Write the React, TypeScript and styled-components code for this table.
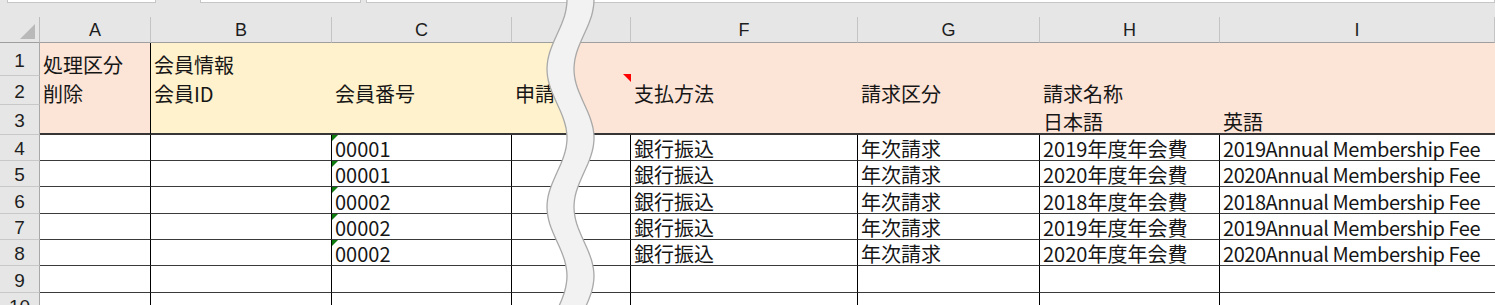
import React from 'react';
import styled, { createGlobalStyle } from 'styled-components';

const GlobalStyle = createGlobalStyle`
  html, body {
    margin: 0;
    padding: 0;
    background: #ffffff;
    overflow: hidden;
  }
`;

const PEACH = '#fce4d6';
const YELLOW = '#fff2cc';
const HEAD = '#e6e6e6';
const LINE_V = '1px solid #000';
const LINE_H = '1px solid #3a3a3a';

// row header + A..H, column I takes the rest
const COLS = [40, 111, 181, 180, 56, 63, 227, 182, 180];
const LETTERS = ['A', 'B', 'C', '', '', 'F', 'G', 'H', 'I'];
const HEAD_BG = [PEACH, YELLOW, YELLOW, YELLOW, PEACH, PEACH, PEACH, PEACH, PEACH];

const Page = styled.div`
  position: relative;
  width: 1495px;
  height: 305px;
  overflow: hidden;
  font-family: 'Noto Sans CJK JP', 'Noto Sans', sans-serif;
  color: #161616;
`;

const TopStrip = styled.div`
  height: 17px;
  background: ${HEAD};
  display: grid;
  grid-template-columns: 149px 161px 1fr;
  column-gap: 44px;
  padding-left: 7px;
  align-items: start;

  & > div:last-child {
    margin-left: -39px;
  }
`;

const FormulaBox = styled.div`
  height: 2px;
  background: #fff;
  border: 1px solid #c6c6c6;
  border-top: none;
`;

const Sheet = styled.div`
  display: grid;
  grid-template-columns: ${COLS.map((c) => `${c}px`).join(' ')} 1fr;
  grid-template-rows: 26px 33px 29px 30px 26px 26px 27px 26px 26px 27px 26px;
`;

const Corner = styled.div`
  background: ${HEAD};
  border-right: 1px solid #bcbcbc;
  border-bottom: 1px solid #9f9f9f;
  display: flex;
  align-items: flex-end;
  justify-content: flex-end;
  padding: 0 4px 3px 0;

  &::after {
    content: '';
    border-bottom: 15px solid #b9b9b9;
    border-left: 15px solid transparent;
  }
`;

const ColHead = styled.div`
  background: ${HEAD};
  border-right: 1px solid #c4c4c4;
  border-bottom: 1px solid #9f9f9f;
  display: flex;
  align-items: center;
  justify-content: center;
  font-family: 'Liberation Sans', Arial, sans-serif;
  font-size: 18px;
  color: #1e1e1e;
  padding-top: 1px;
`;

const RowHead = styled.div`
  background: ${HEAD};
  border-right: 1px solid #a8a8a8;
  border-bottom: 1px solid #c8c8c8;
  display: flex;
  align-items: center;
  justify-content: center;
  font-family: 'Liberation Sans', Arial, sans-serif;
  font-size: 19px;
  color: #1e1e1e;
  padding-top: 3px;
`;

const Cell = styled.div<{ $bg?: string; $right?: string; $bottom?: string; $tight?: boolean }>`
  position: relative;
  min-width: 0;
  background: ${({ $bg }) => $bg || '#fff'};
  border-right: ${({ $right }) => $right || 'none'};
  border-bottom: ${({ $bottom }) => $bottom || 'none'};
  display: flex;
  align-items: flex-end;
  padding-left: 3px;
  font-size: 20px;
  line-height: 22px;
  letter-spacing: ${({ $tight }) => ($tight ? '-0.45px' : '0')};
  white-space: nowrap;
`;

const GreenFlag = styled.span`
  position: absolute;
  top: 0;
  left: 0;
  border-top: 6px solid #0c7a0c;
  border-right: 6px solid transparent;
`;

const CommentFlag = styled.span`
  position: absolute;
  top: -2px;
  right: 0;
  border-top: 8px solid #ff0000;
  border-left: 8px solid transparent;
`;

const Tear = styled.svg`
  position: absolute;
  left: 530px;
  top: 0;
  pointer-events: none;
`;

const headRows: { label: string; cells: string[] }[] = [
  { label: '1', cells: ['処理区分', '会員情報', '', '', '', '', '', '', ''] },
  { label: '2', cells: ['削除', '会員ID', '会員番号', '申請日', '', '支払方法', '請求区分', '請求名称', ''] },
  { label: '3', cells: ['', '', '', '', '', '', '', '日本語', '英語'] },
];

const dataRows: { no: string; year: string }[] = [
  { no: '00001', year: '2019' },
  { no: '00001', year: '2020' },
  { no: '00002', year: '2018' },
  { no: '00002', year: '2019' },
  { no: '00002', year: '2020' },
];

const TearBand = () => {
  const left: [number, number][] = [];
  for (let y = -4; y <= 310; y += 4) {
    left.push([27 + 10 * Math.cos((2 * Math.PI * y) / 138), y]);
  }
  const right = left.map(([x, y]) => [x + 27, y] as [number, number]);
  const edge = (pts: [number, number][]) =>
    pts.map(([x, y], i) => `${i ? 'L' : 'M'}${x.toFixed(1)} ${y}`).join(' ');
  const band = `${edge(left)} ${right
    .slice()
    .reverse()
    .map(([x, y]) => `L${x.toFixed(1)} ${y}`)
    .join(' ')} Z`;
  return (
    <Tear width={80} height={305} viewBox="0 0 80 305">
      <path d={band} fill="#f2f2f2" />
      <path d={edge(left)} fill="none" stroke="#a9a9a9" strokeWidth={1.3} />
      <path d={edge(right)} fill="none" stroke="#a9a9a9" strokeWidth={1.3} />
    </Tear>
  );
};

const App = () => {
  return (
    <>
      <GlobalStyle />
      <Page>
        <TopStrip>
          <FormulaBox />
          <FormulaBox />
          <FormulaBox />
        </TopStrip>
        <Sheet>
          <Corner />
          {LETTERS.map((l, i) => (
            <ColHead key={i}>{l}</ColHead>
          ))}

          {headRows.map((row, r) => (
            <React.Fragment key={row.label}>
              <RowHead>{row.label}</RowHead>
              {row.cells.map((text, c) => (
                <Cell
                  key={c}
                  $bg={HEAD_BG[c]}
                  $right={c === 0 ? LINE_V : undefined}
                  $bottom={r === 2 ? '2px solid #363636' : undefined}
                >
                  {r === 1 && c === 4 && <CommentFlag />}
                  {text}
                </Cell>
              ))}
            </React.Fragment>
          ))}

          {dataRows.map((row, r) => (
            <React.Fragment key={r}>
              <RowHead>{r + 4}</RowHead>
              <Cell $right={LINE_V} $bottom={LINE_H} />
              <Cell $right={LINE_V} $bottom={LINE_H} />
              <Cell $right={LINE_V} $bottom={LINE_H}>
                <GreenFlag />
                {row.no}
              </Cell>
              <Cell $bottom={LINE_H} />
              <Cell $right={LINE_V} $bottom={LINE_H} />
              <Cell $right={LINE_V} $bottom={LINE_H}>銀行振込</Cell>
              <Cell $right={LINE_V} $bottom={LINE_H}>年次請求</Cell>
              <Cell $right={LINE_V} $bottom={LINE_H}>{row.year}年度年会費</Cell>
              <Cell $bottom={LINE_H} $tight>
                {row.year}Annual Membership Fee
              </Cell>
            </React.Fragment>
          ))}

          {['9', '10'].map((label) => (
            <React.Fragment key={label}>
              <RowHead>{label}</RowHead>
              {COLS.slice(1).map((_, c) => (
                <Cell key={c} $right={c === 3 ? undefined : LINE_V} $bottom={LINE_H} />
              ))}
              <Cell $bottom={LINE_H} />
            </React.Fragment>
          ))}
        </Sheet>
        <TearBand />
      </Page>
    </>
  );
};

export default App;
